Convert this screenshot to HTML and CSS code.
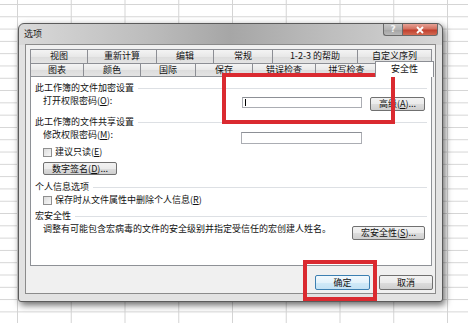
FILE: index.html
```html
<!DOCTYPE html>
<html lang="zh-CN">
<head>
    <meta charset="UTF-8">
    <title>选项</title>
    <link rel="stylesheet" href="styles.css">
</head>
<body>
    <!-- Options dialog -->
    <div class="dialog">
        <div class="titlebar">
            <span class="title">选项</span>
            <div class="caption">
                <span class="cap help">?</span>
                <span class="cap close">
                    <svg width="10" height="8" viewBox="0 0 10 8"><path d="M2 1 L8 7 M8 1 L2 7" stroke="#fff" stroke-width="1.8" fill="none"/></svg>
                </span>
            </div>
        </div>

        <div class="client">
            <!-- Tab rows -->
            <div class="tabs back">
                <span class="tab">视图</span>
                <span class="tab">重新计算</span>
                <span class="tab">编辑</span>
                <span class="tab">常规</span>
                <span class="tab">1-2-3 的帮助</span>
                <span class="tab">自定义序列</span>
            </div>
            <div class="tabs front">
                <span class="tab">图表</span>
                <span class="tab">颜色</span>
                <span class="tab">国际</span>
                <span class="tab">保存</span>
                <span class="tab">错误检查</span>
                <span class="tab">拼写检查</span>
                <span class="tab active">安全性</span>
            </div>

            <!-- Security page -->
            <div class="panel">
                <div class="group">此工作簿的文件加密设置</div>
                <div class="row">
                    <span class="label">打开权限密码(<u>O</u>):</span>
                    <span class="input"><span class="caret"></span></span>
                    <span class="btn adv">高级(<u>A</u>)...</span>
                </div>

                <div class="group">此工作簿的文件共享设置</div>
                <div class="row second">
                    <span class="label">修改权限密码(<u>M</u>):</span>
                    <span class="input"></span>
                </div>
                <div class="check">
                    <span class="box"></span>建议只读(<u>E</u>)
                </div>
                <div class="btn sign">数字签名(<u>D</u>)...</div>

                <div class="group gap">个人信息选项</div>
                <div class="check">
                    <span class="box"></span>保存时从文件属性中删除个人信息(<u>R</u>)
                </div>

                <div class="group gap macro-head">宏安全性</div>
                <div class="row macro">
                    <span>调整有可能包含宏病毒的文件的安全级别并指定受信任的宏创建人姓名。</span>
                    <span class="btn macro-btn">宏安全性(<u>S</u>)...</span>
                </div>
            </div>

            <div class="actions">
                <span class="btn ok">确定</span>
                <span class="btn cancel">取消</span>
            </div>
        </div>
    </div>

    <!-- Red highlight marks -->
    <div class="mark mark-password"></div>
    <div class="mark mark-ok"></div>
</body>
</html>
```

FILE: styles.css
```css
/* Page = spreadsheet grid behind the dialog */
body {
    margin: 0;
    width: 468px;
    height: 323px;
    overflow: hidden;
    position: relative;
    font-family: "Noto Sans CJK SC", "Noto Sans", sans-serif;
    font-size: 9px;
    color: #111;
    background-color: #fff;
    background-image:
        linear-gradient(to right, #d4d4d4 1px, transparent 1px),
        linear-gradient(to bottom, #d4d4d4 1px, transparent 1px);
    background-size: 53.75px 12.3px;
    background-position: 17px 4px;
}

u {
    text-decoration: underline;
}

/* Dialog window */
.dialog {
    position: absolute;
    left: 18px;
    top: 23px;
    width: 425px;
    height: 279px;
    box-sizing: border-box;
    border: 1px solid #5b5b5b;
    border-radius: 6px 6px 3px 3px;
    padding: 0 6px 7px 6px;
    display: flex;
    flex-direction: column;
    background:
        linear-gradient(to right, #d9d9d9, #bdbdbd 30%, #a6a6a6 50%, #bcbcbc 72%, #d6d6d6) top / 100% 21px no-repeat,
        #e2e2e2;
    box-shadow: 2px 3px 7px rgba(0, 0, 0, 0.6);
}

.titlebar {
    height: 20px;
    display: flex;
    align-items: flex-start;
}

.title {
    margin-left: -1px;
    line-height: 19px;
    color: #1a1a1a;
}

.caption {
    margin-left: auto;
    margin-right: -2px;
    display: flex;
}

.cap {
    height: 12px;
    box-sizing: border-box;
    border: 1px solid #6a6a6a;
    border-top: none;
    display: flex;
    align-items: center;
    justify-content: center;
}

.help {
    width: 19px;
    border-radius: 0 0 0 3px;
    border-right: none;
    background: linear-gradient(#c9c9c9, #b3b3b3 50%, #a3a3a3 51%, #b8b8b8);
    color: #f4f4f4;
    font-family: "DejaVu Sans", sans-serif;
    font-size: 9px;
    font-weight: bold;
    line-height: 1;
}

.close {
    width: 36px;
    border-radius: 0 0 3px 0;
    background: linear-gradient(#e6a195, #d3705f 45%, #c0402e 55%, #d26a52);
}

/* Client area */
.client {
    flex: 1;
    box-sizing: border-box;
    border: 1px solid #8b8b8b;
    background: #f0f0f0;
    padding: 4px 3px 0 4px;
    display: flex;
    flex-direction: column;
}

.tabs {
    display: grid;
}

.tabs.back {
    height: 14px;
    grid-template-columns: 57px 69px 57px 59px 85px 75px;
}

.tabs.front {
    height: 13px;
    grid-template-columns: 53px 57px 55px 57px 63px 62px 55px;
}

.tab {
    box-sizing: border-box;
    border: 1px solid #8c8e94;
    border-bottom: none;
    margin-right: -1px;
    background: linear-gradient(#f4f4f4, #e8e8e8 50%, #dcdcdc 51%, #e4e4e4);
    text-align: center;
    line-height: 12px;
    white-space: nowrap;
}

.tab:last-child {
    margin-right: 0;
}

.tab.active {
    position: relative;
    z-index: 1;
    margin: -2px -2px -1px -2px;
    background: #fff;
    line-height: 14px;
}

/* Tab page */
.panel {
    height: 190px;
    box-sizing: border-box;
    border: 1px solid #8e9196;
    background: #fff;
    padding: 6px 4px 0 4px;
}

.group {
    display: flex;
    align-items: center;
    line-height: 10px;
    white-space: nowrap;
}

.group::after {
    content: "";
    flex: 1;
    height: 1px;
    margin-left: 4px;
    background: #dde0e4;
}

.row + .group {
    margin-top: 6px;
}

.group.gap {
    margin-top: 7px;
}

.group.macro-head {
    margin-top: 6px;
}

.row {
    display: flex;
    align-items: flex-start;
    margin: 3px 0 0 8px;
    line-height: 10px;
}

.label {
    flex: 0 0 199px;
}

.input {
    width: 120px;
    height: 11px;
    margin-top: 1px;
    box-sizing: border-box;
    border: 1px solid #abadb3;
    border-top-color: #8d9096;
    background: #fff;
    display: flex;
    align-items: center;
    padding-left: 2px;
}

.row.second .label {
    flex-basis: 198px;
}

.row.second .input {
    width: 121px;
    height: 12px;
    margin-top: 2px;
}

.caret {
    width: 1px;
    height: 7px;
    background: #000;
}

.btn {
    box-sizing: border-box;
    border: 1px solid #707070;
    border-radius: 2px;
    background: linear-gradient(#f2f2f2, #ebebeb 50%, #dddddd 51%, #cfcfcf);
    text-align: center;
    white-space: nowrap;
    display: flex;
    align-items: center;
    justify-content: center;
}

.adv {
    width: 55px;
    height: 14px;
    margin: 1px 0 0 8px;
}

.check {
    display: flex;
    align-items: center;
    margin: 3px 0 0 8px;
    line-height: 10px;
}

.box {
    width: 9px;
    height: 9px;
    box-sizing: border-box;
    border: 1px solid #8f8f8f;
    background: linear-gradient(135deg, #dcdcdc, #f8f8f8);
    margin-right: 3px;
}

.sign {
    width: 74px;
    height: 13px;
    margin: 5px 0 0 8px;
}

.row.macro {
    margin-top: 3px;
}

.macro-btn {
    width: 73px;
    height: 14px;
    margin: 2px 2px 0 auto;
}

/* OK / Cancel */
.actions {
    display: flex;
    justify-content: flex-end;
    gap: 9px;
    margin: 9px -1px 0 0;
}

.ok,
.cancel {
    height: 15px;
}

.ok {
    width: 55px;
    border-color: #3c7fb1;
    background: linear-gradient(#f2f9fd, #e3f2fb 50%, #d1eaf8 51%, #c4e2f4);
}

.cancel {
    width: 54px;
}

/* Red highlight rectangles drawn over the screenshot */
.mark {
    position: absolute;
    box-sizing: border-box;
    border: 4px solid #da2a30;
}

.mark-password {
    left: 222px;
    top: 73px;
    width: 173px;
    height: 51px;
}

.mark-ok {
    left: 303px;
    top: 260px;
    width: 74px;
    height: 41px;
}
```
